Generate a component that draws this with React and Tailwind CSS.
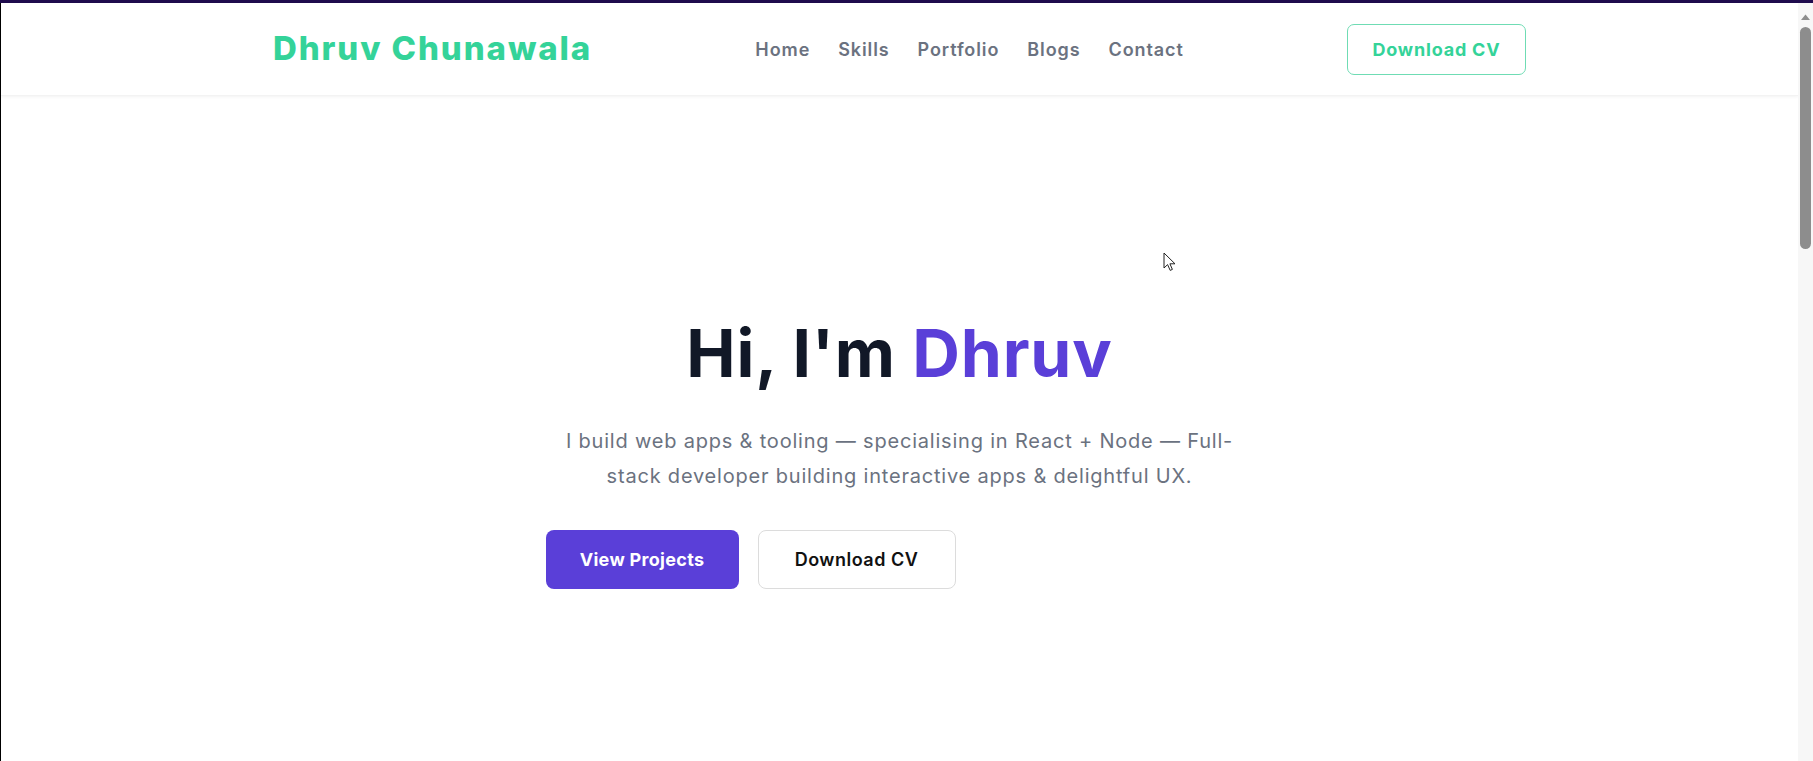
import React from 'react';

const navLinks = ['Home', 'Skills', 'Portfolio', 'Blogs', 'Contact'];

function Cursor() {
  return (
    <svg width="14" height="20" viewBox="0 0 14 20" className="absolute left-[1163px] top-[252px]">
      <path d="M1 1 L1 16 L4.6 12.6 L7.2 18.4 L9.4 17.4 L6.9 11.8 L12 11.8 Z" fill="#fff" stroke="#222" strokeWidth="1" strokeLinejoin="round" />
    </svg>
  );
}

function Scrollbar() {
  return (
    <div className="w-[15px] bg-[#f7f7f7] flex flex-col items-center">
      <svg width="11" height="8" viewBox="0 0 11 8" className="mt-[10px]">
        <path d="M1 7 L5.5 1.5 L10 7 Z" fill="#8d8d8d" />
      </svg>
      <div className="mt-[6px] w-[11px] h-[222px] rounded-full bg-[#8d8d8d]" />
    </div>
  );
}

export default function App() {
  return (
    <div className="h-screen flex flex-col overflow-hidden bg-white relative" style={{ fontFamily: 'Inter, "Open Sans", sans-serif' }}>
      <div className="h-[3px] bg-[#1f0b4d]" />
      <div className="flex flex-1 min-h-0">
        <main className="flex-1 border-l border-black flex flex-col">
          <header className="h-[93px] shrink-0 flex items-center shadow-[0_1px_3px_rgba(0,0,0,0.05)] border-b border-[#f3f3f3]">
            <div className="w-full max-w-[1253px] mx-auto flex items-center justify-between">
              <a className="text-[33px] font-extrabold tracking-[1.9px] text-[#34d399]">Dhruv Chunawala</a>
              <nav className="flex items-center gap-[28px]">
                {navLinks.map(link => (
                  <a key={link} className="text-[18px] font-semibold tracking-[0.9px] text-[#6b7280]">{link}</a>
                ))}
              </nav>
              <button className="w-[179px] h-[51px] rounded-[7px] border border-[#6fdcb4] text-[18px] font-bold tracking-[0.8px] text-[#34d399]">
                Download CV
              </button>
            </div>
          </header>

          <section className="flex flex-col items-center pt-[224px]">
            <h1 className="text-[66px] leading-none font-bold tracking-[0.8px] text-[#111827]">
              Hi, I'm <span className="text-[#5a3fd8]">Dhruv</span>
            </h1>
            <p className="mt-[38px] max-w-[692px] text-center text-[20px] leading-[35px] tracking-[0.8px] text-[#6b7280]">
              I build web apps &amp; tooling — specialising in React + Node — Full-stack developer building interactive apps &amp; delightful UX.
            </p>
            <div className="w-[708px] mt-[36px] flex gap-[19px]">
              <button className="w-[193px] h-[59px] rounded-[8px] bg-[#5a3fd8] text-white text-[18px] font-bold tracking-[0.3px]">
                View Projects
              </button>
              <button className="w-[198px] h-[59px] rounded-[8px] border border-[#dcdcdc] bg-white text-[#111] text-[18px] font-semibold tracking-[0.5px]">
                Download CV
              </button>
            </div>
          </section>
        </main>
        <Scrollbar />
      </div>
      <Cursor />
    </div>
  );
}
